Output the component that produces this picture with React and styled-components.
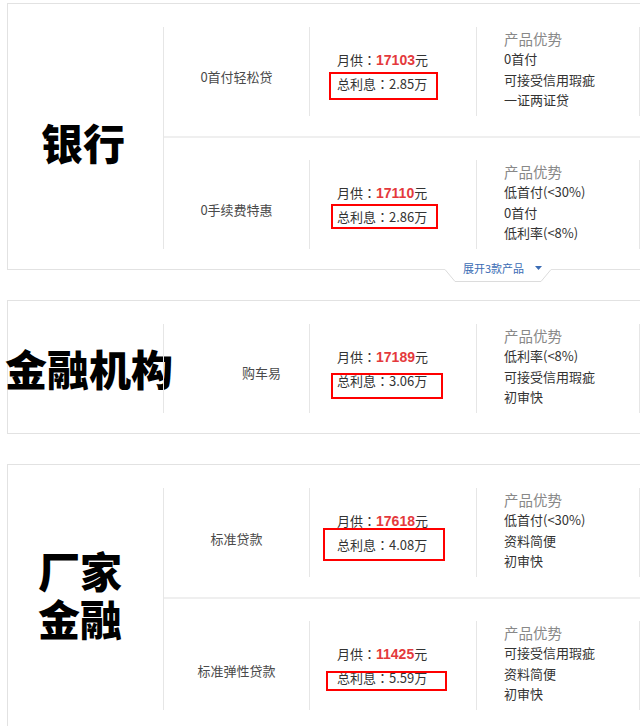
import React from 'react';
import styled, { createGlobalStyle } from 'styled-components';

const Global = createGlobalStyle`
  html, body { margin: 0; padding: 0; background: #fff; overflow: hidden; }
  body { font-family: "Noto Sans CJK SC", "Microsoft YaHei", sans-serif; color: #333; }
  * { box-sizing: border-box; }
`;

const Page = styled.div`
  display: flex;
  flex-direction: column;
  gap: 30px;
  padding: 3px 0 0 7px;
  width: 720px;
`;

const Card = styled.section`
  position: relative;
  display: grid;
  grid-template-columns: 155px 1fr;
  width: 700px;
  border: 1px solid #e2e2e2;
  background: #fff;
`;

const Category = styled.div`
  display: flex;
  flex-direction: column;
  align-items: center;
  justify-content: center;
  padding: ${(p) => p.$pad || '0'};
  font-family: "Noto Sans CJK SC", sans-serif;
  font-weight: 900;
  font-size: 42px;
  line-height: 48px;
  color: #000;
  white-space: nowrap;
`;

const Products = styled.div`
  border-left: 1px solid #e6e6e6;
  margin: 23px 0 20px;
`;

const Row = styled.div`
  display: grid;
  grid-template-columns: 145px 167px 163px 1fr;
  padding: ${(p) => (p.$pos === 'top' ? '0 0 20px' : p.$pos === 'bottom' ? '22px 0 0' : '0')};
  border-bottom: ${(p) => (p.$pos === 'top' ? '2px solid #efefef' : 'none')};
`;

const NameCell = styled.div`
  display: flex;
  align-items: center;
  justify-content: center;
  height: 89px;
  padding-top: ${(p) => p.$dy ?? 9}px;
  padding-left: ${(p) => p.$dx ?? 0}px;
  font-size: 13px;
  color: #4a4a4a;
  white-space: nowrap;
`;

const PriceCell = styled.div`
  position: relative;
  display: flex;
  flex-direction: column;
  justify-content: center;
  height: 89px;
  border-left: 1px solid #e6e6e6;
  padding-left: 27px;
  font-size: 13px;
  line-height: 23px;
  color: #333;
  white-space: nowrap;
`;

const Colon = styled.span`
  font-family: "Noto Sans CJK TC", "Noto Sans CJK SC", sans-serif;
`;

const Amount = styled.span`
  font-family: "Liberation Sans", Arial, sans-serif;
  font-weight: 700;
  font-size: 14px;
  color: #e4393c;
`;

const Mark = styled.div`
  position: absolute;
  left: ${(p) => p.$x}px;
  top: ${(p) => p.$y}px;
  width: ${(p) => p.$w}px;
  height: ${(p) => p.$h}px;
  border: 2px solid #ff0000;
  pointer-events: none;
`;

const AdvCell = styled.div`
  height: 89px;
  border-left: 1px solid #e6e6e6;
  padding: 2px 0 0 27px;
  white-space: nowrap;
`;

const AdvTitle = styled.div`
  font-size: 14.5px;
  line-height: 20px;
  color: #888;
`;

const AdvItem = styled.div`
  font-size: 13px;
  line-height: 20.5px;
  color: #333;
`;

const EmptyCell = styled.div`
  height: 89px;
  border-left: 1px solid #e6e6e6;
`;

const Expand = styled.div`
  position: absolute;
  left: 437px;
  bottom: -14px;
  width: 106px;
  height: 21px;
  background: #fff;
  display: flex;
  align-items: flex-start;
  gap: 11px;
  padding-left: 18px;
  font-size: 11px;
  line-height: 12px;
  color: #3b6cb4;
  white-space: nowrap;
`;

const ExpandOutline = styled.svg`
  position: absolute;
  left: 0;
  top: 0;
  width: 106px;
  height: 21px;
  pointer-events: none;
`;

const ExpandLabel = styled.span`
  position: relative;
`;

const ExpandArrow = styled.svg`
  position: relative;
  margin-top: 4px;
  width: 7px;
  height: 4px;
`;

const cards = [
  {
    title: ['银行'],
    pad: '11px 5px 0 0',
    expand: true,
    rows: [
      { name: '0首付轻松贷', monthly: '17103', interest: '2.85', adv: ['0首付', '可接受信用瑕疵', '一证两证贷'], mark: [19, 45, 109, 28] },
      { name: '0手续费特惠', monthly: '17110', interest: '2.86', adv: ['低首付(<30%)', '0首付', '低利率(<8%)'], mark: [21, 44, 107, 25] },
    ],
  },
  {
    title: ['金融机构'],
    pad: '2px 0 0 7px',
    rows: [
      { name: '购车易', dx: 50, dy: 7, monthly: '17189', interest: '3.06', adv: ['低利率(<8%)', '可接受信用瑕疵', '初审快'], mark: [21, 49, 112, 26] },
    ],
  },
  {
    title: ['厂家', '金融'],
    pad: '0 11px 8px 0',
    rows: [
      { name: '标准贷款', dy: 11, monthly: '17618', interest: '4.08', adv: ['低首付(<30%)', '资料简便', '初审快'], mark: [13, 40, 122, 33] },
      { name: '标准弹性贷款', monthly: '11425', interest: '5.59', adv: ['可接受信用瑕疵', '资料简便', '初审快'], mark: [16, 50, 121, 20] },
    ],
  },
];

export default function App() {
  return (
    <>
      <Global />
      <Page>
        {cards.map((card, ci) => (
          <Card key={ci}>
            <Category $pad={card.pad}>
              {card.title.map((t) => (
                <div key={t}>{t}</div>
              ))}
            </Category>
            <Products>
              {card.rows.map((r, ri) => {
                const pos = card.rows.length === 1 ? 'single' : ri === 0 ? 'top' : 'bottom';
                return (
                  <Row key={ri} $pos={pos}>
                    <NameCell $dx={r.dx} $dy={r.dy}>{r.name}</NameCell>
                    <PriceCell>
                      <div>
                        月供<Colon>：</Colon><Amount>{r.monthly}</Amount>元
                      </div>
                      <div>
                        总利息<Colon>：</Colon>{r.interest}万
                      </div>
                      <Mark $x={r.mark[0]} $y={r.mark[1]} $w={r.mark[2]} $h={r.mark[3]} />
                    </PriceCell>
                    <AdvCell>
                      <AdvTitle>产品优势</AdvTitle>
                      {r.adv.map((a) => (
                        <AdvItem key={a}>{a}</AdvItem>
                      ))}
                    </AdvCell>
                    <EmptyCell />
                  </Row>
                );
              })}
            </Products>
            {card.expand && (
              <Expand>
                <ExpandOutline viewBox="0 0 106 21">
                  <polyline points="0,7.5 10,19.5 96,19.5 106,7.5" fill="none" stroke="#dcdcdc" strokeWidth="1" />
                </ExpandOutline>
                <ExpandLabel>展开3款产品</ExpandLabel>
                <ExpandArrow viewBox="0 0 7 4">
                  <polygon points="0,0 7,0 3.5,4" fill="#3b6cb4" />
                </ExpandArrow>
              </Expand>
            )}
          </Card>
        ))}
      </Page>
    </>
  );
}
